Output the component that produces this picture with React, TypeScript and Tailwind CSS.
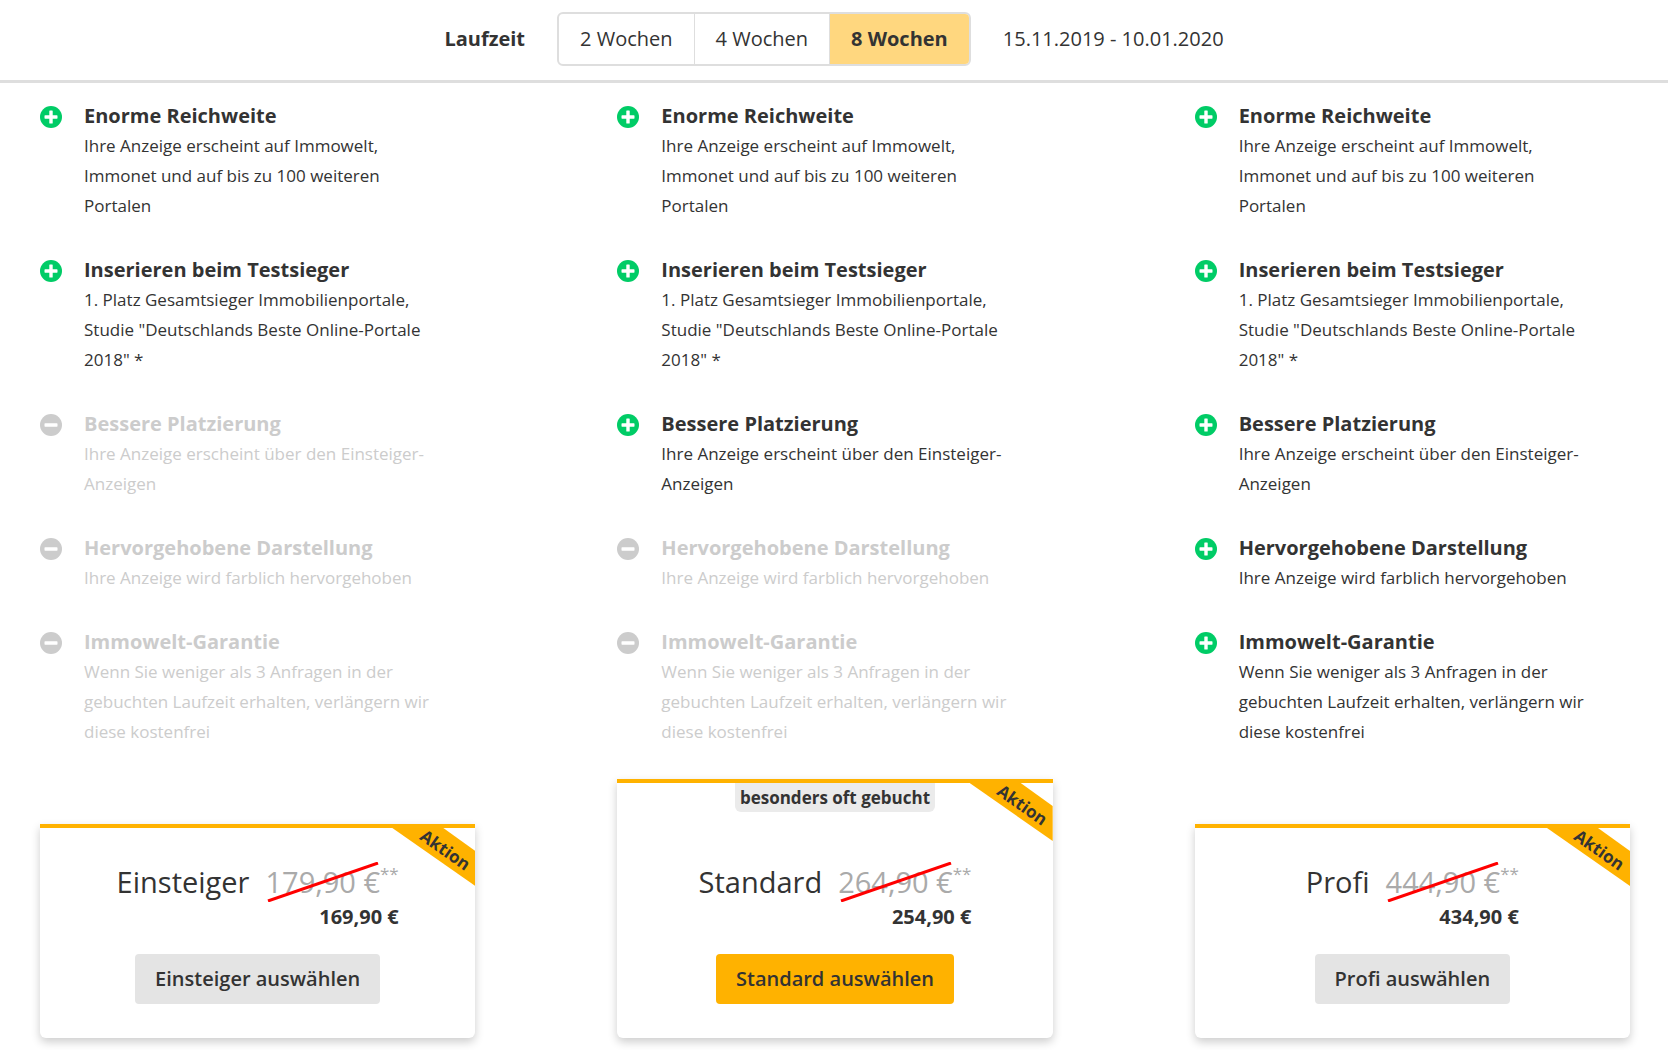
import { useState } from "react";
import clsx from "clsx";

const features = [
  {
    title: "Enorme Reichweite",
    text: "Ihre Anzeige erscheint auf Immowelt, Immonet und auf bis zu 100 weiteren Portalen",
  },
  {
    title: "Inserieren beim Testsieger",
    text: '1. Platz Gesamtsieger Immobilienportale, Studie "Deutschlands Beste Online-Portale 2018" *',
  },
  {
    title: "Bessere Platzierung",
    text: "Ihre Anzeige erscheint über den Einsteiger-Anzeigen",
  },
  {
    title: "Hervorgehobene Darstellung",
    text: "Ihre Anzeige wird farblich hervorgehoben",
  },
  {
    title: "Immowelt-Garantie",
    text: "Wenn Sie weniger als 3 Anfragen in der gebuchten Laufzeit erhalten, verlängern wir diese kostenfrei",
  },
];

const plans = [
  { name: "Einsteiger", included: 2, oldPrice: "179,90 €", price: "169,90 €", popular: false },
  { name: "Standard", included: 3, oldPrice: "264,90 €", price: "254,90 €", popular: true },
  { name: "Profi", included: 5, oldPrice: "444,90 €", price: "434,90 €", popular: false },
];

const durations = ["2 Wochen", "4 Wochen", "8 Wochen"];

type Plan = (typeof plans)[number];

function FeatureIcon({ included }: { included: boolean }) {
  return (
    <svg viewBox="0 0 22 22" className="mt-[6px] size-[22px] shrink-0" aria-hidden="true">
      <circle cx="11" cy="11" r="11" fill={included ? "#00cc66" : "#cccccc"} />
      <rect x="4.5" y="9.3" width="13" height="3.4" rx="0.6" fill="#fff" />
      {included && <rect x="9.3" y="4.5" width="3.4" height="13" rx="0.6" fill="#fff" />}
    </svg>
  );
}

function FeatureList({ included }: { included: number }) {
  return (
    <ul className="flex flex-col gap-[33px]">
      {features.map((feature, i) => (
        <li
          key={feature.title}
          className={clsx("flex gap-[22px]", i < included ? "text-[#333]" : "text-[#ccc]")}
        >
          <FeatureIcon included={i < included} />
          <div className="max-w-[345px]">
            <h3 className="text-[20px] leading-[31px] font-bold">{feature.title}</h3>
            <p className="text-[17px] leading-[30px]">{feature.text}</p>
          </div>
        </li>
      ))}
    </ul>
  );
}

function Ribbon() {
  return (
    <div className="absolute top-0 right-0 h-[58px] w-[83px]">
      <div className="h-full bg-[#ffb200] [clip-path:polygon(0_0,51px_0,100%_23px,100%_100%)]" />
      <span className="absolute top-[10px] right-[2px] rotate-[35deg] text-[17px] leading-[24px] font-bold">
        Aktion
      </span>
    </div>
  );
}

function PlanCard({ plan }: { plan: Plan }) {
  return (
    <div
      className={clsx(
        "relative flex flex-col items-center rounded-b-md border-t-4 border-[#ffb200] pb-[34px] shadow-[0_4px_10px_rgba(0,0,0,0.2)]",
        !plan.popular && "pt-[34px]"
      )}
    >
      {plan.popular && (
        <span className="mb-[50px] rounded-b-md bg-[#ebebeb] px-[5px] text-[17px] leading-[29px] font-bold">
          besonders oft gebucht
        </span>
      )}
      <Ribbon />
      <div className="flex gap-4">
        <h2 className="text-[29px] leading-[40px]">{plan.name}</h2>
        <div className="text-right">
          <div className="flex text-[#aaa]">
            <s className="relative text-[29px] leading-[40px] no-underline">
              {plan.oldPrice}
              <svg
                viewBox="0 0 112 40"
                className="absolute top-0 right-px h-[40px] w-[112px]"
                aria-hidden="true"
              >
                <path d="M1 39 L111 1" stroke="#ff0000" strokeWidth="3" />
              </svg>
            </s>
            <span className="text-[17px] leading-[24px]">**</span>
          </div>
          <div className="text-[20px] leading-[30px] font-bold">{plan.price}</div>
        </div>
      </div>
      <button
        type="button"
        className={clsx(
          "mt-[22px] rounded px-5 py-[10px] text-[20px] leading-[30px] font-semibold",
          plan.popular ? "bg-[#ffb200]" : "bg-[#e4e4e4]"
        )}
      >
        {plan.name} auswählen
      </button>
    </div>
  );
}

function App() {
  const [duration, setDuration] = useState("8 Wochen");

  return (
    <div className="bg-white font-['Open_Sans',sans-serif] text-[#333]">
      <header className="flex items-center justify-center gap-8 border-b-3 border-[#dedede] pt-3 pb-[14px] text-[20px] leading-[30px]">
        <span className="font-bold">Laufzeit</span>
        <div className="flex divide-x divide-[#dedede] overflow-hidden rounded-md border-2 border-[#dedede]">
          {durations.map((d) => (
            <button
              key={d}
              type="button"
              aria-pressed={d === duration}
              onClick={() => setDuration(d)}
              className={clsx("px-[21px] py-[10px]", d === duration && "bg-[#ffd77f] font-bold")}
            >
              {d}
            </button>
          ))}
        </div>
        <span>15.11.2019 - 10.01.2020</span>
      </header>
      <main className="grid grid-cols-3 gap-[142px] pt-[17px] pr-[38px] pb-3 pl-10">
        {plans.map((plan) => (
          <section key={plan.name} className="flex flex-col justify-between gap-8">
            <FeatureList included={plan.included} />
            <PlanCard plan={plan} />
          </section>
        ))}
      </main>
    </div>
  );
}

export default App;
